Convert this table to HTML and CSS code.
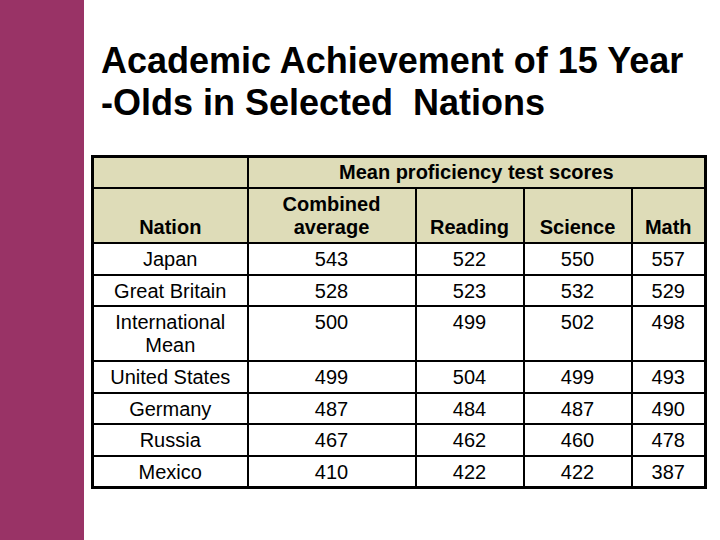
FILE: index.html
```html
<!DOCTYPE html>
<html>
<head>
<meta charset="utf-8">
<link rel="stylesheet" href="styles.css">
</head>
<body>
<div class="slide">
  <div class="sidebar"></div>
  <div class="content">
    <h1 class="title">Academic Achievement of 15 Year<br>-Olds in Selected&nbsp; Nations</h1>
    <table class="scores">
      <colgroup>
        <col class="c-nation">
        <col class="c-comb">
        <col class="c-sub">
        <col class="c-sub">
        <col class="c-math">
      </colgroup>
      <thead>
        <tr class="h1row">
          <th></th>
          <th colspan="4">Mean proficiency test scores</th>
        </tr>
        <tr class="h2row">
          <th>Nation</th>
          <th>Combined<br>average</th>
          <th>Reading</th>
          <th>Science</th>
          <th>Math</th>
        </tr>
      </thead>
      <tbody>
        <tr class="r-short"><td>Japan</td><td>543</td><td>522</td><td>550</td><td>557</td></tr>
        <tr class="r-thin"><td>Great Britain</td><td>528</td><td>523</td><td>532</td><td>529</td></tr>
        <tr class="r-tall"><td>International<br>Mean</td><td>500</td><td>499</td><td>502</td><td>498</td></tr>
        <tr class="r-short"><td>United States</td><td>499</td><td>504</td><td>499</td><td>493</td></tr>
        <tr class="r-thin"><td>Germany</td><td>487</td><td>484</td><td>487</td><td>490</td></tr>
        <tr class="r-short"><td>Russia</td><td>467</td><td>462</td><td>460</td><td>478</td></tr>
        <tr class="r-thin"><td>Mexico</td><td>410</td><td>422</td><td>422</td><td>387</td></tr>
      </tbody>
    </table>
  </div>
</div>
</body>
</html>
```
FILE: styles.css
```css
html, body {
  margin: 0;
  padding: 0;
  background: #ffffff;
}
.slide {
  display: flex;
  width: 720px;
  height: 540px;
  font-family: "Liberation Sans", Arial, sans-serif;
  color: #000;
}
.sidebar {
  width: 84px;
  flex: none;
  background: #993366;
}
.content {
  flex: 1;
  padding: 40px 0 0 7px;
}
.title {
  margin: 0 0 31px 10px;
  font-size: 36px;
  line-height: 42px;
  font-weight: bold;
}
.scores {
  border-collapse: collapse;
  border: 3px solid #000;
  width: 613px;
  table-layout: fixed;
  font-size: 20px;
  line-height: 23px;
}
.c-nation { width: 155px; }
.c-comb { width: 168px; }
.c-sub { width: 108px; }
.c-math { width: 74px; }
.scores th, .scores td {
  border: 2px solid #000;
  text-align: center;
  padding: 0;
}
.scores th {
  background: #dedcb8;
  font-weight: bold;
}
.h1row th {
  height: 29px;
  vertical-align: middle;
}
.h2row th {
  height: 50px;
  vertical-align: bottom;
  padding-bottom: 3px;
}
.scores td {
  vertical-align: top;
  padding-top: 4px;
}
.r-short td { height: 26px; }
.r-thin td { height: 25px; }
.r-tall td { height: 49px; }
```
